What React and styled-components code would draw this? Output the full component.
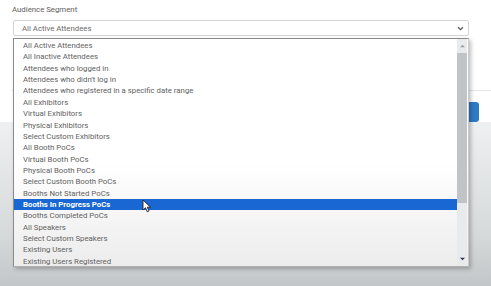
import React from 'react';
import styled, { createGlobalStyle } from 'styled-components';

const options = [
	'All Active Attendees',
	'All Inactive Attendees',
	'Attendees who logged in',
	"Attendees who didn't log in",
	'Attendees who registered in a specific date range',
	'All Exhibitors',
	'Virtual Exhibitors',
	'Physical Exhibitors',
	'Select Custom Exhibitors',
	'All Booth PoCs',
	'Virtual Booth PoCs',
	'Physical Booth PoCs',
	'Select Custom Booth PoCs',
	'Booths Not Started PoCs',
	'Booths In Progress PoCs',
	'Booths Completed PoCs',
	'All Speakers',
	'Select Custom Speakers',
	'Existing Users',
	'Existing Users Registered',
];

const ACTIVE = 'Booths In Progress PoCs';

const App = () => {
	return (
		<Page>
			<GlobalStyle />
			<Body>
				<Label>Audience Segment</Label>
				<SelectBox>
					<span>All Active Attendees</span>
					<Chevron viewBox="0 0 8 6">
						<path d="M1 1.5 L4 4.5 L7 1.5" fill="none" stroke="#555" strokeWidth="1.4" />
					</Chevron>
				</SelectBox>
				<Footer>
					<Button>Save</Button>
				</Footer>
			</Body>
			<Lower />

			<Dropdown>
				<List>
					{options.map((o) => (
						<Option key={o} $active={o === ACTIVE}>
							{o}
						</Option>
					))}
				</List>
				<Scrollbar>
					<Arrow viewBox="0 0 6 4">
						<path d="M0 3.5 L3 0.5 L6 3.5 Z" fill="#9a9ea2" />
					</Arrow>
					<Track>
						<Thumb />
					</Track>
					<Arrow viewBox="0 0 6 4">
						<path d="M0 0.5 L3 3.5 L6 0.5 Z" fill="#2b3a55" />
					</Arrow>
				</Scrollbar>
				<Cursor viewBox="0 0 10 14">
					<path
						d="M1 1 L1 11 L3.5 8.8 L5.3 12.8 L7 12 L5.3 8.2 L8.5 8.2 Z"
						fill="#fff"
						stroke="#222"
						strokeWidth="0.9"
						strokeLinejoin="round"
					/>
				</Cursor>
			</Dropdown>
		</Page>
	);
};

export default App;

const GlobalStyle = createGlobalStyle`
	body {
		margin: 0;
		background: #fff;
		font-family: Roboto, 'Liberation Sans', Arial, sans-serif;
	}
`;

const Page = styled.div`
	position: relative;
	width: 491px;
	height: 286px;
	overflow: hidden;
	display: flex;
	flex-direction: column;
	background: #fff;
`;

const Body = styled.div`
	height: 122px;
	padding: 5px 0 0 12px;
	box-sizing: border-box;
	display: flex;
	flex-direction: column;
	background: #fff;
`;

const Label = styled.div`
	font-size: 7.8px;
	line-height: 10px;
	color: #5e5e5e;
`;

const SelectBox = styled.div`
	margin-top: 5px;
	margin-left: 1px;
	width: 456px;
	height: 19px;
	box-sizing: border-box;
	border: 1px solid #d4d4d4;
	border-radius: 2px;
	display: flex;
	align-items: center;
	justify-content: space-between;
	padding: 0 4px 0 8px;
	font-size: 7.8px;
	color: #6a6a6a;
	background: #fff;
`;

const Chevron = styled.svg`
	width: 7px;
	height: 5px;
`;

const Footer = styled.div`
	margin-top: 54px;
	border-top: 1px solid #e6e6e6;
	display: flex;
	justify-content: flex-end;
	padding: 11px 12px 0 0;
`;

const Button = styled.div`
	width: 60px;
	height: 20px;
	border-radius: 3px;
	background: #2f7bc4;
	color: #fff;
	font-size: 8px;
	display: flex;
	align-items: center;
	justify-content: center;
`;

const Lower = styled.div`
	flex: 1;
	background: linear-gradient(#eef0f1, #d6d9da 70%, #c3c6c8);
`;

const Dropdown = styled.div`
	position: absolute;
	top: 38px;
	left: 13px;
	width: 456px;
	height: 229px;
	box-sizing: border-box;
	border: 1px solid #8a8a8a;
	border-right-color: #c8c8c8;
	border-bottom-color: #b0b0b0;
	background: linear-gradient(#ffffff 55%, #ececec);
	box-shadow: 2px 2px 4px rgba(0, 0, 0, 0.25);
	display: flex;
`;

const List = styled.div`
	flex: 1;
	padding-top: 1px;
	display: flex;
	flex-direction: column;
`;

const Option = styled.div`
	height: 11.37px;
	line-height: 11.37px;
	padding-left: 9px;
	font-size: 7.8px;
	white-space: nowrap;
	color: ${(p) => (p.$active ? '#fff' : '#626262')};
	font-weight: ${(p) => (p.$active ? 700 : 400)};
	background: ${(p) => (p.$active ? '#1967d2' : 'transparent')};
`;

const Scrollbar = styled.div`
	width: 10px;
	margin-right: 1px;
	background: #e9eaeb;
	display: flex;
	flex-direction: column;
	align-items: center;
`;

const Arrow = styled.svg`
	width: 5px;
	height: 4px;
	margin: 5px 0;
`;

const Track = styled.div`
	flex: 1;
	width: 100%;
`;

const Thumb = styled.div`
	height: 150px;
	background: #c1c4c6;
`;

const Cursor = styled.svg`
	position: absolute;
	left: 128px;
	top: 160px;
	width: 10px;
	height: 14px;
`;
